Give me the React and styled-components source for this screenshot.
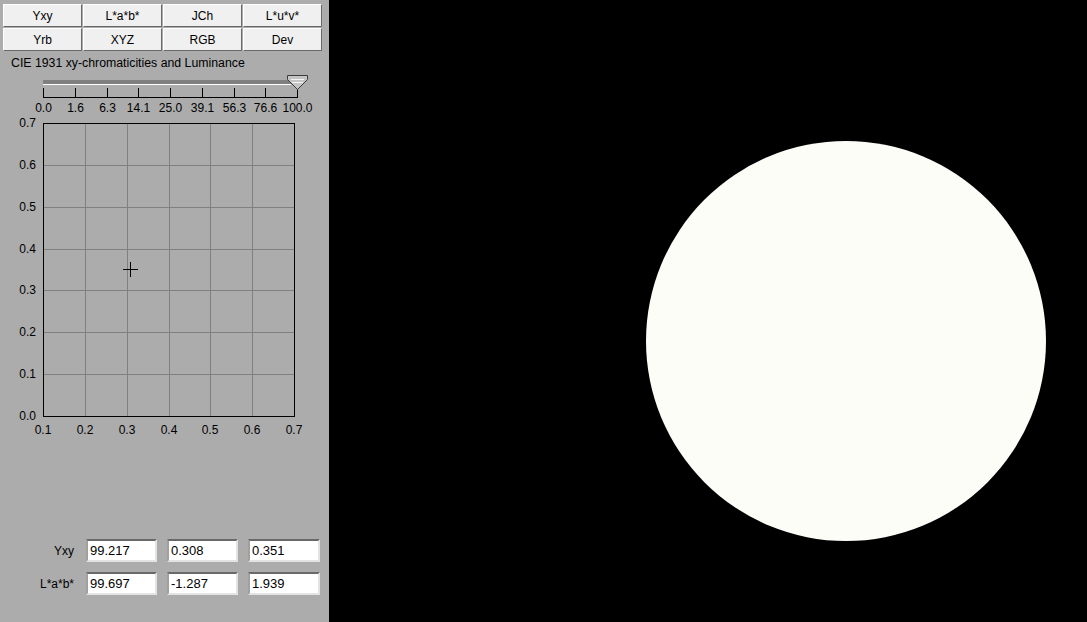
import styled, { createGlobalStyle } from 'styled-components'

const GlobalStyle = createGlobalStyle`
  html, body { margin: 0; padding: 0; background: #000; }
  body { font-family: "Liberation Sans", Arial, sans-serif; font-size: 12px; }
`

const Page = styled.div`
  display: flex;
  width: 1087px;
  height: 622px;
  background: #000;
  overflow: hidden;
`

const Panel = styled.div`
  width: 329px;
  flex: none;
  background: #acacac;
  display: flex;
  flex-direction: column;
`

const ModeGrid = styled.div`
  display: grid;
  grid-template-columns: repeat(4, 79px);
  grid-auto-rows: 23px;
  column-gap: 1px;
  row-gap: 1px;
  padding: 4px 0 0 3px;
`

const ModeButton = styled.button`
  margin: 0;
  padding: 0;
  background: #f0f0f0;
  border-top: 1px solid #fff;
  border-left: 1px solid #fff;
  border-right: 1px solid #696969;
  border-bottom: 1px solid #696969;
  font-family: "Liberation Sans", Arial, sans-serif;
  font-size: 12px;
  color: #000;
`

const Title = styled.div`
  margin: 5px 0 0 11px;
  height: 14px;
  line-height: 14px;
  font-size: 12.3px;
  color: #000;
`

const Drawing = styled.svg`
  display: block;
  font-family: "Liberation Sans", Arial, sans-serif;
  font-size: 12px;
`

const Fields = styled.div`
  display: grid;
  grid-template-columns: 76px 71px 71px 72px;
  grid-auto-rows: 23px;
  column-gap: 10px;
  row-gap: 10px;
  margin-top: 99px;
  align-items: center;
`

const FieldLabel = styled.div`
  text-align: right;
  padding-right: 2px;
  color: #000;
`

const Field = styled.input`
  box-sizing: border-box;
  width: 100%;
  height: 23px;
  margin: 0;
  padding: 0 0 0 2px;
  background: #fff;
  border-top: 2px solid #696969;
  border-left: 2px solid #a0a0a0;
  border-right: 2px solid #e3e3e3;
  border-bottom: 2px solid #e3e3e3;
  font-family: "Liberation Sans", Arial, sans-serif;
  font-size: 13px;
  color: #000;
  outline: none;
`

const Stage = styled.div`
  flex: 1;
  display: flex;
  justify-content: flex-end;
  align-items: flex-start;
  padding: 141px 41px 0 0;
`

const Disc = styled.div`
  width: 400px;
  height: 400px;
  border-radius: 50%;
  background: #fcfdf7;
`

const modes = ['Yxy', 'L*a*b*', 'JCh', 'L*u*v*', 'Yrb', 'XYZ', 'RGB', 'Dev']
const steps = ['0.0', '1.6', '6.3', '14.1', '25.0', '39.1', '56.3', '76.6', '100.0']

function Slider() {
  const x0 = 43
  const pitch = 31.75
  return (
    <Drawing width="329" height="44" viewBox="0 70 329 44">
      <rect x="43" y="80" width="248" height="4" fill="#7f7f7f" />
      <rect x="43" y="84" width="248" height="1" fill="#fff" />
      <line x1="43" y1="97.5" x2="297" y2="97.5" stroke="#000" />
      {steps.map((s, i) => {
        const x = Math.round(x0 + i * pitch) + 0.5
        return (
          <g key={s}>
            <line x1={x} y1="88" x2={x} y2="98" stroke="#000" />
            <text x={x} y="111.5" textAnchor="middle" fill="#000">{s}</text>
          </g>
        )
      })}
      <polygon points="287.5,75.5 307.5,75.5 307.5,79.5 297.5,89.5 287.5,79.5" fill="#c4c4c4" stroke="#3c3c3c" />
      <line x1="291" y1="79.5" x2="304" y2="79.5" stroke="#f4f4f4" />
      <line x1="292" y1="82.5" x2="303" y2="82.5" stroke="#f4f4f4" />
    </Drawing>
  )
}

function Chart() {
  const left = 43, right = 294, top = 123, bottom = 416
  const cols = 6, rows = 7
  const cw = (right - left) / cols
  const rh = (bottom - top) / rows
  const px = left + (0.308 - 0.1) / 0.6 * (right - left)
  const py = bottom - 0.351 / 0.7 * (bottom - top)
  return (
    <Drawing width="329" height="326" viewBox="0 114 329 326">
      {Array.from({ length: cols - 1 }, (_, i) => {
        const x = Math.round(left + (i + 1) * cw) + 0.5
        return <line key={'v' + i} x1={x} y1={top} x2={x} y2={bottom} stroke="#808080" />
      })}
      {Array.from({ length: rows - 1 }, (_, i) => {
        const y = Math.round(top + (i + 1) * rh) + 0.5
        return <line key={'h' + i} x1={left} y1={y} x2={right} y2={y} stroke="#808080" />
      })}
      <rect x={left + 0.5} y={top + 0.5} width={right - left} height={bottom - top} fill="none" stroke="#000" />
      {Array.from({ length: rows + 1 }, (_, i) => (
        <text key={'yl' + i} x="36" y={Math.round(bottom - i * rh) + 4} textAnchor="end" fill="#000">
          {(i / 10).toFixed(1)}
        </text>
      ))}
      {Array.from({ length: cols + 1 }, (_, i) => (
        <text key={'xl' + i} x={Math.round(left + i * cw)} y="434" textAnchor="middle" fill="#000">
          {((i + 1) / 10).toFixed(1)}
        </text>
      ))}
      <line x1={Math.round(px) - 7} y1={Math.round(py) + 0.5} x2={Math.round(px) + 8} y2={Math.round(py) + 0.5} stroke="#000" />
      <line x1={Math.round(px) + 0.5} y1={Math.round(py) - 7} x2={Math.round(px) + 0.5} y2={Math.round(py) + 8} stroke="#000" />
    </Drawing>
  )
}

const rowsData = [
  { label: 'Yxy', values: ['99.217', '0.308', '0.351'] },
  { label: 'L*a*b*', values: ['99.697', '-1.287', '1.939'] },
]

export default function App() {
  return (
    <Page>
      <GlobalStyle />
      <Panel>
        <ModeGrid>
          {modes.map(m => <ModeButton key={m}>{m}</ModeButton>)}
        </ModeGrid>
        <Title>CIE 1931 xy-chromaticities and Luminance</Title>
        <Slider />
        <Chart />
        <Fields>
          {rowsData.map(r => [
            <FieldLabel key={r.label}>{r.label}</FieldLabel>,
            ...r.values.map((v, i) => <Field key={r.label + i} defaultValue={v} readOnly />),
          ])}
        </Fields>
      </Panel>
      <Stage>
        <Disc />
      </Stage>
    </Page>
  )
}
